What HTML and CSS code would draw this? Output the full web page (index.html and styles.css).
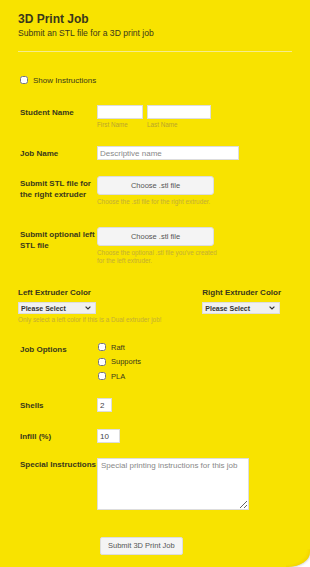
FILE: index.html
```html
<!DOCTYPE html>
<html lang="en">
<head>
    <meta charset="UTF-8">
    <title>3D Print Job</title>
    <link rel="stylesheet" href="styles.css">
</head>
<body>
    <div class="paper">
        <div class="head">
            <h1>3D Print Job</h1>
            <p>Submit an STL file for a 3D print job</p>
        </div>

        <label class="show">
            <input type="checkbox"/> Show Instructions
        </label>

        <div class="row student">
            <div class="lbl">Student Name</div>
            <div class="field">
                <div class="pair">
                    <div>
                        <input type="text" class="first"/>
                        <span class="sub">First Name</span>
                    </div>
                    <div>
                        <input type="text" class="last"/>
                        <span class="sub">Last Name</span>
                    </div>
                </div>
            </div>
        </div>

        <div class="row jobname">
            <div class="lbl">Job Name</div>
            <div class="field">
                <input type="text" class="wide" placeholder="Descriptive name"/>
            </div>
        </div>

        <div class="row stl">
            <div class="lbl">Submit STL file for the right extruder</div>
            <div class="field">
                <div class="filebtn">Choose .stl file</div>
                <span class="help">Choose the .stl file for the right extruder.</span>
            </div>
        </div>

        <div class="row stl stl-left">
            <div class="lbl">Submit optional left STL file</div>
            <div class="field">
                <div class="filebtn">Choose .stl file</div>
                <span class="help">Choose the optional .stl file you've created for the left extruder.</span>
            </div>
        </div>

        <div class="colors">
            <div class="color">
                <div class="lbl">Left Extruder Color</div>
                <div class="sel">
                    <select><option>Please Select</option></select>
                    <svg class="chev" width="6" height="4" viewBox="0 0 6 4"><path d="M0.6 0.6 L3 3 L5.4 0.6" fill="none" stroke="#333" stroke-width="1.2"/></svg>
                </div>
                <span class="help">Only select a left color if this is a Dual extruder job!</span>
            </div>
            <div class="color">
                <div class="lbl">Right Extruder Color</div>
                <div class="sel">
                    <select><option>Please Select</option></select>
                    <svg class="chev" width="6" height="4" viewBox="0 0 6 4"><path d="M0.6 0.6 L3 3 L5.4 0.6" fill="none" stroke="#333" stroke-width="1.2"/></svg>
                </div>
            </div>
        </div>

        <div class="row options">
            <div class="lbl">Job Options</div>
            <div class="field">
                <label class="opt"><input type="checkbox"/> Raft</label>
                <label class="opt"><input type="checkbox"/> Supports</label>
                <label class="opt"><input type="checkbox"/> PLA</label>
            </div>
        </div>

        <div class="row shells">
            <div class="lbl">Shells</div>
            <div class="field"><input type="text" class="num" value="2"/></div>
        </div>

        <div class="row infill">
            <div class="lbl">Infill (%)</div>
            <div class="field"><input type="text" class="num num2" value="10"/></div>
        </div>

        <div class="row special">
            <div class="lbl">Special Instructions</div>
            <div class="field">
                <textarea placeholder="Special printing instructions for this job"></textarea>
            </div>
        </div>

        <div class="submit">
            <button>Submit 3D Print Job</button>
        </div>
    </div>
</body>
</html>
```

FILE: styles.css
```css
*{
    box-sizing:border-box;
}
body{
    margin:0;
    background:#fff;
    font-family:"Liberation Sans", Arial, sans-serif;
    color:#3a381c;
    overflow:hidden;
}
.paper{
    position:relative;
    height:567px;
    background:#f8e300;
    padding:12px 0 0;
    border-bottom-right-radius:22px 15px;
    box-shadow:0 0 3px rgba(0,0,0,.35);
    overflow:hidden;
}
.paper::after{
    content:"";
    position:absolute;
    right:0;
    bottom:0;
    width:24px;
    height:18px;
    background:radial-gradient(ellipse at 0 0, rgba(248,227,0,0) 60%, #f2d000 78%, #e2b500 100%);
    border-bottom-right-radius:22px 15px;
}
.head{
    margin:0 18px;
    padding-bottom:13px;
    border-bottom:1px solid #f6ec8c;
}
.head h1{
    margin:0;
    font-size:12px;
    line-height:14px;
    font-weight:bold;
}
.head p{
    margin:2px 0 0;
    font-size:8.6px;
    line-height:10px;
}
.show{
    display:flex;
    align-items:center;
    height:12px;
    margin:22px 0 0 20px;
    font-size:8px;
}
input[type=checkbox]{
    width:8px;
    height:8px;
    margin:0 5px 0 0;
}
.row{
    display:flex;
    padding-left:20px;
}
.lbl{
    width:77px;
    flex:none;
    font-size:8px;
    font-weight:bold;
    line-height:11px;
    padding:2px 0 0 0;
}
.field{
    flex:1;
}
input[type=text], textarea{
    display:block;
    border:1px solid #ddd;
    background:#fff;
    font-family:inherit;
    font-size:8px;
    color:#444;
    padding:0 2px;
    height:14px;
    border-radius:0;
    margin:0;
}
input::placeholder, textarea::placeholder{
    color:#888;
}
.student{
    margin-top:19px;
    height:41px;
}
.pair{
    display:flex;
    gap:4px;
}
.first{ width:46px; }
.last{ width:64px; }
.sub{
    display:block;
    font-size:6.3px;
    color:#bba62c;
    margin-top:2px;
}
.jobname{
    height:30px;
}
.wide{
    width:142px;
}
.stl{
    height:51px;
}
.stl-left{
    height:61px;
}
.filebtn{
    width:117px;
    height:19px;
    line-height:17px;
    text-align:center;
    background:#f4f4f4;
    border:1px solid #ddd;
    border-radius:3px;
    font-size:7.5px;
    color:#555;
}
.help{
    display:block;
    font-size:6.4px;
    color:#c4ae36;
    margin-top:3px;
    line-height:8px;
    width:124px;
}
.colors{
    display:flex;
    justify-content:space-between;
    height:52px;
    margin:0 29px 0 18px;
}
.color .lbl{
    width:auto;
    padding:0;
    line-height:10px;
    margin-bottom:4px;
}
.sel{
    position:relative;
    width:78px;
}
select{
    display:block;
    width:78px;
    height:12px;
    font-family:inherit;
    font-size:7px;
    font-weight:bold;
    color:#333;
    background:#f0f0f0;
    border:1px solid #ddd;
    border-radius:0;
    padding:0 2px;
    appearance:none;
    -webkit-appearance:none;
}
.chev{
    position:absolute;
    right:5px;
    top:4px;
}
.color .help{
    width:auto;
    margin-top:2px;
}
.options{
    height:58px;
}
.options .lbl{
    padding-top:4px;
}
.opt{
    display:flex;
    align-items:center;
    font-size:7.5px;
    height:14.5px;
    margin-left:1px;
}
.shells{
    height:31px;
}
.infill{
    height:29px;
}
.special{
    height:76px;
}
.special .lbl{
    padding-top:1px;
}
textarea{
    width:152px;
    height:52px;
    padding:2px 3px;
    resize:vertical;
}
.submit{
    margin-left:100px;
}
.submit button{
    font-family:inherit;
    font-size:7.5px;
    color:#555;
    background:#f4f4f4;
    border:1px solid #ddd;
    border-radius:2px;
    height:18px;
    padding:0 7px;
}
.num{
    width:15px;
}
.num2{
    width:23px;
}
```
